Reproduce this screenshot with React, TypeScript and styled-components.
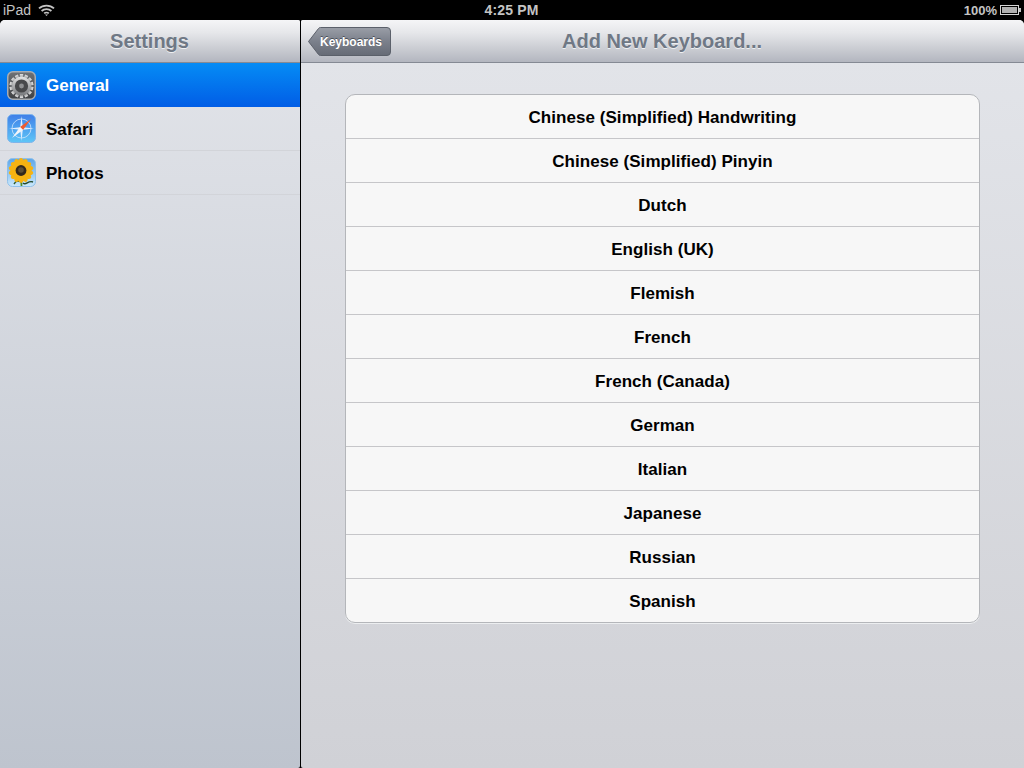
import { createGlobalStyle, styled } from "styled-components";

const GlobalStyle = createGlobalStyle`
  html, body {
    margin: 0;
    padding: 0;
    background: #000;
    font-family: "Liberation Sans", Arial, sans-serif;
  }
`;

const Screen = styled.div`
  width: 1024px;
  height: 768px;
  display: flex;
  flex-direction: column;
  overflow: hidden;
  background: #000;
`;

const StatusBar = styled.div`
  height: 20px;
  flex: none;
  display: grid;
  grid-template-columns: 1fr auto 1fr;
  align-items: center;
  padding: 0 3px 0 3px;
  color: #c4c4c4;
`;

const StatusLeft = styled.div`
  display: flex;
  align-items: center;
  gap: 7px;
  font-size: 14px;
`;

const StatusTime = styled.div`
  font-weight: bold;
  font-size: 14px;
  letter-spacing: 0.15px;
  margin-right: 1px;
`;

const StatusRight = styled.div`
  display: flex;
  align-items: center;
  justify-content: flex-end;
  gap: 3px;
  font-size: 13px;
  font-weight: bold;
`;

const Panes = styled.div`
  flex: 1;
  display: flex;
  gap: 1px;
  min-height: 0;
`;

const Sidebar = styled.div`
  width: 300px;
  flex: none;
  display: flex;
  flex-direction: column;
  background: linear-gradient(#e3e5ea, #bec4ce);
  border-radius: 5px 2px 2px 0;
  overflow: hidden;
`;

const Detail = styled.div`
  flex: 1;
  display: flex;
  flex-direction: column;
  background: linear-gradient(#e3e5ea, #d0d1d6);
  border-radius: 2px 5px 0 2px;
  overflow: hidden;
`;

const NavBar = styled.div`
  position: relative;
  height: 43px;
  box-sizing: border-box;
  flex: none;
  display: flex;
  align-items: center;
  justify-content: center;
  background: linear-gradient(#f5f5f7, #e6e7ea 30%, #b3b6bf);
  border-bottom: 1px solid #858a94;
`;

const NavTitle = styled.div`
  font-size: 20px;
  font-weight: bold;
  color: #6f7885;
  text-shadow: 0 1px 0 #eef0f2;
  margin-right: 1px;
`;

const BackButton = styled.div`
  position: absolute;
  left: 7px;
  top: 7px;
  height: 29px;
  width: 83px;
  box-sizing: border-box;
  padding-left: 12px;
  display: flex;
  align-items: center;
  color: #fff;
  font-size: 12px;
  font-weight: bold;
  text-shadow: 0 -1px 0 #4a4f59;
`;

const BackShape = styled.svg`
  position: absolute;
  left: 0;
  top: 0;
`;

const BackLabel = styled.span`
  position: relative;
`;

const SideRow = styled.div<{ $active?: boolean }>`
  height: 44px;
  flex: none;
  box-sizing: border-box;
  display: flex;
  align-items: center;
  gap: 10px;
  padding-left: 7px;
  font-size: 17px;
  font-weight: bold;
  color: ${(p) => (p.$active ? "#fff" : "#000")};
  background: ${(p) => (p.$active ? "linear-gradient(#058cf5, #015de6)" : "transparent")};
  border-bottom: ${(p) => (p.$active ? "none" : "1px solid #d2d4d9")};
`;

const SideLabel = styled.span`
  padding-top: 2px;
`;

const Content = styled.div`
  padding: 31px 44px 0 44px;
`;

const Group = styled.div`
  border: 1px solid #b4b6ba;
  border-radius: 10px;
  background: #f7f7f7;
  overflow: hidden;
  box-shadow: 0 1px 0 #eceef0;
`;

const GroupRow = styled.div`
  height: 44px;
  box-sizing: border-box;
  padding-top: 2px;
  display: flex;
  align-items: center;
  justify-content: center;
  font-size: 17px;
  font-weight: bold;
  letter-spacing: 0.05px;
  color: #000;
  border-bottom: 1px solid #c6c6c9;
  &:last-child {
    height: 43px;
    border-bottom: none;
  }
`;

const languages = [
  "Chinese (Simplified) Handwriting",
  "Chinese (Simplified) Pinyin",
  "Dutch",
  "English (UK)",
  "Flemish",
  "French",
  "French (Canada)",
  "German",
  "Italian",
  "Japanese",
  "Russian",
  "Spanish",
];

function WifiIcon() {
  return (
    <svg width="17" height="12" viewBox="0 0 17 12" fill="none" stroke="#c4c4c4" strokeWidth="1.8">
      <path d="M1 4.4 C5 0.6 12 0.6 16 4.4" />
      <path d="M3.6 7 C6.2 4.5 10.8 4.5 13.4 7" />
      <path d="M6.2 9.4 C7.4 8.3 9.6 8.3 10.8 9.4" />
      <path d="M8.5 12 L7 10.4 L10 10.4 Z" fill="#c4c4c4" stroke="none" />
    </svg>
  );
}

function BatteryIcon() {
  return (
    <svg width="21" height="10" viewBox="0 0 21 10">
      <rect x="0.5" y="0.5" width="18" height="9" fill="none" stroke="#d5d5d5" />
      <rect x="2" y="2" width="15" height="6" fill="#b0b0b0" />
      <rect x="19" y="3" width="2" height="4" fill="#c4c4c4" />
    </svg>
  );
}

function GeneralIcon() {
  const teeth = Array.from({ length: 14 }, (_, i) => (i * 360) / 14);
  return (
    <svg width="29" height="29" viewBox="0 0 29 29">
      <defs>
        <linearGradient id="gen" x1="0" y1="0" x2="0" y2="1">
          <stop offset="0" stopColor="#6f7276" />
          <stop offset="1" stopColor="#3e4043" />
        </linearGradient>
        <linearGradient id="gear" x1="0" y1="0" x2="0" y2="1">
          <stop offset="0" stopColor="#e4e4e4" />
          <stop offset="1" stopColor="#77797c" />
        </linearGradient>
      </defs>
      <rect x="0.75" y="0.75" width="27.5" height="27.5" rx="5" fill="url(#gen)" stroke="#a9adb2" strokeWidth="1.5" />
      {teeth.map((a) => (
        <rect key={a} x="12.8" y="3" width="3.4" height="5" fill="url(#gear)" transform={`rotate(${a} 14.5 15)`} />
      ))}
      <circle cx="14.5" cy="15" r="9.4" fill="url(#gear)" />
      <circle cx="14.5" cy="15" r="6.6" fill="#48494b" />
      <circle cx="14.5" cy="15" r="2.4" fill="#8f9092" />
    </svg>
  );
}

function SafariIcon() {
  return (
    <svg width="29" height="29" viewBox="0 0 29 29">
      <defs>
        <linearGradient id="saf" x1="0" y1="0" x2="0" y2="1">
          <stop offset="0" stopColor="#3f7fe8" />
          <stop offset="1" stopColor="#5ec6f7" />
        </linearGradient>
      </defs>
      <rect x="0.5" y="0.5" width="28" height="28" rx="5" fill="url(#saf)" stroke="#7fb4ea" />
      <path d="M14.5 2 L15.8 13.2 L27 14.5 L15.8 15.8 L14.5 27 L13.2 15.8 L2 14.5 L13.2 13.2 Z" fill="#dfeeff" />
      <circle cx="14.5" cy="14.5" r="9.5" fill="none" stroke="#cfe4fb" strokeWidth="0.8" />
      <path d="M24 5 L13 13 L16 16 Z" fill="#ef5b2e" />
      <path d="M5 24 L13 13 L16 16 Z" fill="#f2f4f8" />
    </svg>
  );
}

function PhotosIcon() {
  const petals = Array.from({ length: 14 }, (_, i) => (i * 360) / 14);
  return (
    <svg width="29" height="29" viewBox="0 0 29 29">
      <defs>
        <linearGradient id="pho" x1="0" y1="0" x2="0" y2="1">
          <stop offset="0" stopColor="#5aa5ea" />
          <stop offset="1" stopColor="#cbe8fb" />
        </linearGradient>
      </defs>
      <rect x="0.5" y="0.5" width="28" height="28" rx="5" fill="url(#pho)" stroke="#8fc0ea" />
      <path d="M14 19 L14.5 28" stroke="#4f8a2c" strokeWidth="1.8" />
      <path d="M14 24 C11 22 9 23 7 26" fill="none" stroke="#2d5a2a" strokeWidth="1.4" />
      <path d="M16 25 C19 28 21 22 26 24" fill="none" stroke="#24492a" strokeWidth="1.4" />
      {petals.map((a) => (
        <ellipse key={a} cx="14" cy="5" rx="3" ry="5" fill="#f6b312" transform={`rotate(${a} 14 12.5)`} />
      ))}
      <circle cx="14" cy="12.5" r="5.4" fill="#33291d" />
      <circle cx="14" cy="12" r="2.8" fill="#5c5038" />
    </svg>
  );
}

export default function App() {
  return (
    <>
      <GlobalStyle />
      <Screen>
        <StatusBar>
          <StatusLeft>
            iPad
            <WifiIcon />
          </StatusLeft>
          <StatusTime>4:25 PM</StatusTime>
          <StatusRight>
            100%
            <BatteryIcon />
          </StatusRight>
        </StatusBar>
        <Panes>
          <Sidebar>
            <NavBar>
              <NavTitle>Settings</NavTitle>
            </NavBar>
            <SideRow $active>
              <GeneralIcon />
              <SideLabel>General</SideLabel>
            </SideRow>
            <SideRow>
              <SafariIcon />
              <SideLabel>Safari</SideLabel>
            </SideRow>
            <SideRow>
              <PhotosIcon />
              <SideLabel>Photos</SideLabel>
            </SideRow>
          </Sidebar>
          <Detail>
            <NavBar>
              <BackButton>
                <BackShape width="83" height="29" viewBox="0 0 83 29">
                  <defs>
                    <linearGradient id="back" x1="0" y1="0" x2="0" y2="1">
                      <stop offset="0" stopColor="#9a9ea7" />
                      <stop offset="0.5" stopColor="#7b808b" />
                      <stop offset="1" stopColor="#666b76" />
                    </linearGradient>
                  </defs>
                  <path
                    d="M0.5 14.5 L10.5 1.5 Q11.2 0.5 12.5 0.5 L79 0.5 Q82.5 0.5 82.5 4 L82.5 25 Q82.5 28.5 79 28.5 L12.5 28.5 Q11.2 28.5 10.5 27.5 Z"
                    fill="url(#back)"
                    stroke="#5b606a"
                  />
                </BackShape>
                <BackLabel>Keyboards</BackLabel>
              </BackButton>
              <NavTitle>Add New Keyboard...</NavTitle>
            </NavBar>
            <Content>
              <Group>
                {languages.map((name) => (
                  <GroupRow key={name}>{name}</GroupRow>
                ))}
              </Group>
            </Content>
          </Detail>
        </Panes>
      </Screen>
    </>
  );
}
